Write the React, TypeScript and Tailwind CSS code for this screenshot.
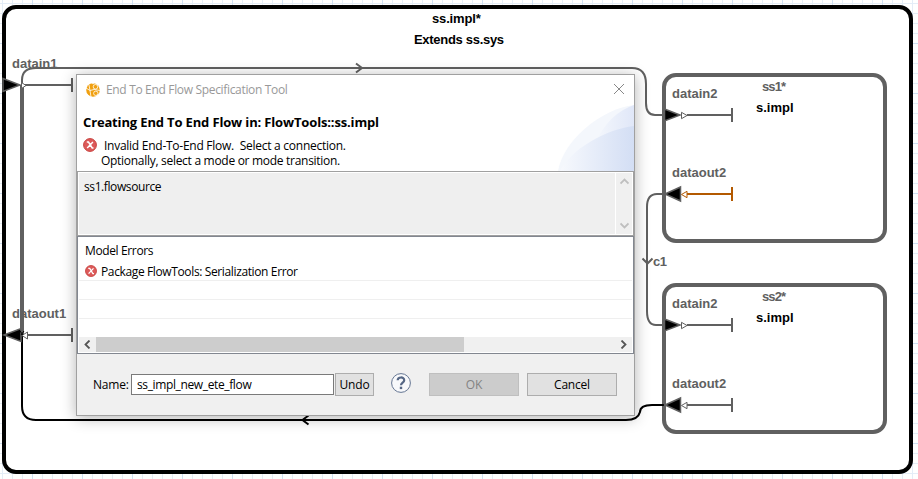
import React from "react";

const GRAY = "#606060";

function Label({ className, children }: { className: string; children: React.ReactNode }) {
  return (
    <span className={`absolute whitespace-pre font-['Liberation_Sans',Arial,sans-serif] text-[13px] leading-4 font-bold ${className}`}>
      {children}
    </span>
  );
}

function Port({ x, y, out, color = GRAY }: { x: number; y: number; out?: boolean; color?: string }) {
  return (
    <g transform={`translate(${x} ${y})`}>
      <path d="M24 0H69M69 -7V7" stroke={color} strokeWidth="2" />
      {out ? (
        <>
          <path d="M2 0L17.500 -7V7Z" fill="#000" stroke={GRAY} strokeWidth="1.500" />
          <path d="M18.500 .5L24 -2.700V3.700Z" fill="#fff" stroke={color} />
        </>
      ) : (
        <>
          <path d="M1.500 -6L17 0L1.500 6Z" fill="#000" stroke={GRAY} strokeWidth="1.500" />
          <path d="M24 .5L18.500 -2.700V3.700Z" fill="#fff" stroke={color} />
        </>
      )}
    </g>
  );
}

function Diagram() {
  return (
    <svg className="absolute inset-0" width="918" height="479" fill="none">
      <defs>
        <pattern id="minor" x="2" y="3" width="10" height="10" patternUnits="userSpaceOnUse">
          <path d="M.5 0V10M0 .5H10" stroke="#e4edf7" />
        </pattern>
        <pattern id="major" x="32" y="43" width="50" height="50" patternUnits="userSpaceOnUse">
          <path d="M.5 0V50M0 .5H50" stroke="#cfe0f3" />
        </pattern>
      </defs>
      <rect width="918" height="479" fill="url(#minor)" />
      <rect width="918" height="479" fill="url(#major)" />
      <rect x="4" y="7" width="907" height="465" rx="12" fill="#fff" stroke="#000" strokeWidth="4" />
      <rect x="664" y="75" width="221" height="166" rx="12" fill="#fff" stroke={GRAY} strokeWidth="4" />
      <rect x="664" y="285" width="221" height="147" rx="12" fill="#fff" stroke={GRAY} strokeWidth="4" />

      <path d="M22 85V335" stroke={GRAY} strokeWidth="4" />
      <path d="M22 86V80Q22 68 36 68H632Q646 68 646 84V103Q646 115 655 115H664" stroke={GRAY} strokeWidth="2" />
      <path d="M356 63.500L362 68L356 72.500" stroke={GRAY} strokeWidth="2" />
      <path d="M664 194H657Q647 194 647 207V311Q647 325 656 325H664" stroke={GRAY} strokeWidth="2" />
      <path d="M642.500 258.500L647.500 263.500L652.500 258.500" stroke={GRAY} strokeWidth="2" />
      <path d="M664 405H652Q640 405 640 412Q638 420 626 420H36Q22 420 22 406V335" stroke="#000" strokeWidth="2" />
      <path d="M308.500 415.500L302.500 420L308.500 424.500" stroke="#000" strokeWidth="2" />

      <path d="M25 85H72M72 78V92M26 335H72M72 328V342" stroke={GRAY} strokeWidth="2" />
      <path d="M3 78.500L20 85L3 91.500Z" fill="#000" stroke={GRAY} strokeWidth="1.500" />
      <path d="M26 85.500L21.500 82.500V88.500Z" fill="#fff" stroke={GRAY} />
      <path d="M4 335L21 328.500V341.500Z" fill="#000" stroke={GRAY} strokeWidth="1.500" />
      <path d="M22 335.500L27.500 332V339Z" fill="#fff" stroke={GRAY} />
      <path d="M20 331L23 335M24 331L21 335" stroke="#000" />

      <Port x={663} y={115} />
      <Port x={663} y={194} out color="#b35900" />
      <Port x={663} y={325} />
      <Port x={663} y={405} out />
    </svg>
  );
}

function ErrorIcon({ size }: { size: number }) {
  return (
    <svg width={size} height={size} viewBox="0 0 14 14" className="shrink-0">
      <circle cx="7" cy="7" r="6.400" fill="#dc5a5a" stroke="#c8433f" />
      <path d="M3.800 4H5.500L9.200 10H10.500M9.900 4L4.200 10" stroke="#fff" strokeWidth="1.500" fill="none" />
    </svg>
  );
}

function TitleBar() {
  return (
    <div className="flex h-[30px] items-center pr-[10px] pl-[9px]">
      <svg width="14" height="14" viewBox="0 0 14 14">
        <circle cx="7" cy="7" r="6.800" fill="#f0a010" />
        <g stroke="#fff" strokeWidth=".8" fill="none">
          <circle cx="9.500" cy="3.800" r="2.300" />
          <circle cx="9.800" cy="10.300" r="2.200" />
          <path d="M0 5L4 7.500L8 6.500L14 7.500M4 7.500L5 14M4 7.500L3 2" />
        </g>
        <path d="M0 0H2.500L0 3ZM0 10L3 13L0 14ZM6 0L7 1.500L8 0" fill="#fff" />
      </svg>
      <span className="ml-[6px] text-[12px] tracking-[-0.33px] text-[#999]">End To End Flow Specification Tool</span>
      <svg className="mb-[2px] ml-auto" width="10" height="10" viewBox="0 0 10 10">
        <path d="M0 0L10 10M10 0L0 10" stroke="#888" strokeWidth="1" />
      </svg>
    </div>
  );
}

function Header() {
  return (
    <div className="relative flex h-[66px] flex-col pl-[6px]">
      <svg className="absolute right-0 bottom-0" width="76" height="66" viewBox="0 0 76 66">
        <defs>
          <linearGradient id="swoosh">
            <stop offset="0" stopColor="#f4f7fc" />
            <stop offset="1" stopColor="#e0e7f8" />
          </linearGradient>
          <linearGradient id="swoosh2">
            <stop offset="0" stopColor="#f7f9fd" />
            <stop offset="1" stopColor="#d3def4" />
          </linearGradient>
        </defs>
        <path d="M0 66C5 35 45 3 76 0V66Z" fill="#f4f7fc" />
        <path d="M38 36Q52 8 76 0V66H38Z" fill="url(#swoosh)" />
        <path d="M2 66C12 45 48 24 76 21V66Z" fill="url(#swoosh2)" />
      </svg>
      <div className="relative mt-[9px] text-[13px] leading-4 font-bold tracking-[-0.15px]">
        Creating End To End Flow in: FlowTools::ss.impl
      </div>
      <div className="relative mt-[8px] flex">
        <ErrorIcon size={14} />
        <div className="ml-[4px] text-[12px] leading-[15px] tracking-[-0.26px] whitespace-pre">
          <div className="pl-[3px]">Invalid End-To-End Flow.  Select a connection.</div>
          <div className="tracking-[-0.29px]">Optionally, select a mode or mode transition.</div>
        </div>
      </div>
    </div>
  );
}

function Chevron({ d, color }: { d: string; color: string }) {
  return (
    <svg width="9" height="9" viewBox="0 0 9 9">
      <path d={d} fill="none" stroke={color} strokeWidth="1.800" />
    </svg>
  );
}

function FlowList() {
  return (
    <div className="flex h-[65px] border border-[#a0a0a0] bg-white p-px">
      <div className="flex-1 bg-[#efefef] pt-[6px] pl-[5px] text-[12px] leading-4 tracking-[-0.4px]">ss1.flowsource</div>
      <div className="ml-px flex w-4 flex-col items-center justify-between bg-[#f0f0f0] py-[4px]">
        <Chevron d="M.5 6.500L4.500 2.500L8.500 6.500" color="#bfbfbf" />
        <Chevron d="M.5 2.500L4.500 6.500L8.500 2.500" color="#bfbfbf" />
      </div>
    </div>
  );
}

function ErrorTable() {
  return (
    <div className="flex h-[118px] flex-col border border-[#828790] bg-white p-px text-[12px] tracking-[-0.37px]">
      <div className="flex h-[24px] items-center pt-px pl-[6px]">Model Errors</div>
      <div className="flex h-[19px] items-center border-b border-[#efefef] pl-[6px]">
        <ErrorIcon size={12} />
        <span className="mt-[2px] ml-[4px]">Package FlowTools: Serialization Error</span>
      </div>
      <div className="h-[19px] border-b border-[#efefef]" />
      <div className="h-[19px] border-b border-[#efefef]" />
      <div className="mt-auto flex h-[15px] items-center bg-[#f0f0f0]">
        <div className="flex w-[17px] justify-center">
          <Chevron d="M6.500 .5L2.500 4.500L6.500 8.500" color="#555" />
        </div>
        <div className="h-full w-[368px] bg-[#cdcdcd]" />
        <div className="ml-auto flex w-[17px] justify-center">
          <Chevron d="M2.500 .5L6.500 4.500L2.500 8.500" color="#555" />
        </div>
      </div>
    </div>
  );
}

function Footer() {
  return (
    <div className="flex flex-1 items-start bg-[#f0f0f0] pt-[19px] pl-[16px] text-[12px] tracking-[-0.2px]">
      <span className="w-[38px] leading-[23px]">Name:</span>
      <div className="mt-px h-[21px] w-[203px] border border-[#7a7a7a] bg-white pl-[5px] leading-[19px] tracking-[-0.37px]">ss_impl_new_ete_flow</div>
      <button className="ml-px h-[23px] w-[39px] border border-[#adadad] bg-[#e1e1e1] leading-[21px]">Undo</button>
      <svg className="ml-[17px]" width="20" height="20" viewBox="0 0 20 20" fill="none">
        <circle cx="10" cy="10" r="9.400" fill="#f8f9fb" stroke="#647592" />
        <path d="M6.700 7.300C6.700 3.600 13.200 3.500 13.200 7.200C13.200 9.600 10 9.700 10 12.300" stroke="#566785" strokeWidth="2.200" />
        <rect x="8.800" y="13.700" width="2.400" height="2.400" fill="#566785" />
      </svg>
      <button className="ml-[18px] h-[23px] w-[90px] border border-[#bfbfbf] bg-[#cccccc] leading-[21px] text-[#838383]">OK</button>
      <button className="ml-[8px] h-[23px] w-[90px] border border-[#adadad] bg-[#e1e1e1] leading-[21px]">Cancel</button>
    </div>
  );
}

export default function App() {
  return (
    <div className="relative h-[479px] w-[918px] overflow-hidden bg-white">
      <Diagram />
      <Label className="top-[11px] left-[432px] tracking-[-0.15px] text-black">ss.impl*</Label>
      <Label className="top-[32px] left-[414px] tracking-[-0.3px] text-black">Extends ss.sys</Label>
      <Label className="top-[56px] left-[12px] text-[#606060]">datain1</Label>
      <Label className="top-[306px] left-[12px] text-[#606060]">dataout1</Label>
      <Label className="top-[86px] left-[672px] text-[#606060]">datain2</Label>
      <Label className="top-[165px] left-[672px] text-[#606060]">dataout2</Label>
      <Label className="top-[79px] left-[762px] tracking-[-0.9px] text-[#606060]">ss1*</Label>
      <Label className="top-[100px] left-[756px] text-black">s.impl</Label>
      <Label className="top-[254px] left-[653px] tracking-[-0.5px] text-[#606060]">c1</Label>
      <Label className="top-[296px] left-[672px] text-[#606060]">datain2</Label>
      <Label className="top-[376px] left-[672px] text-[#606060]">dataout2</Label>
      <Label className="top-[289px] left-[762px] tracking-[-0.9px] text-[#606060]">ss2*</Label>
      <Label className="top-[310px] left-[756px] text-black">s.impl</Label>

      <div className="absolute top-[74px] left-[76px] flex h-[342px] w-[559px] flex-col border border-[#a0a0a0] bg-white font-['Open_Sans','Noto_Sans',sans-serif] text-black shadow-[0_2px_14px_rgba(0,0,0,0.3)]">
        <TitleBar />
        <Header />
        <FlowList />
        <ErrorTable />
        <Footer />
      </div>
    </div>
  );
}
